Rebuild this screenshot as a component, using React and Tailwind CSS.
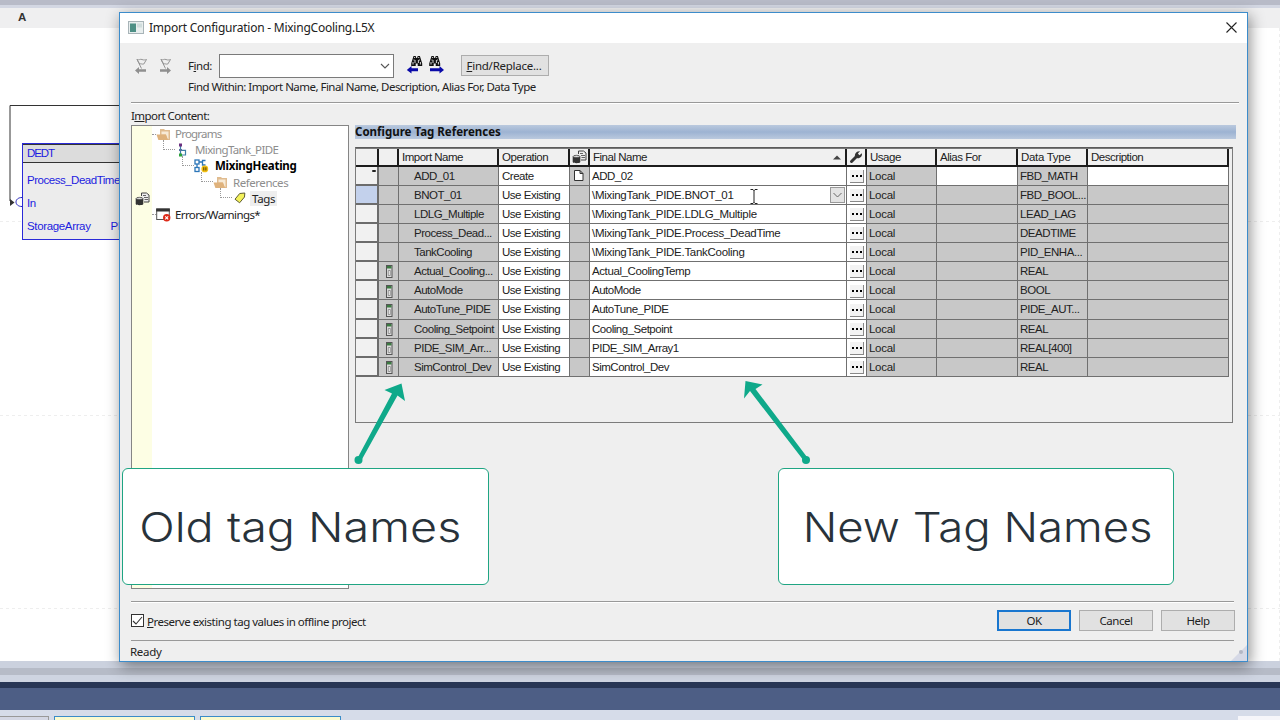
import React from "react";

const ui = "font-['Noto_Sans',sans-serif]";
const gridFont = "font-['Liberation_Sans',Arial,sans-serif]";

function Folder() {
  return (
    <svg width="15" height="13" viewBox="0 0 15 13" className="shrink-0">
      <path d="M4 1h4l1 1h5v10H4z" fill="#e0bc90" />
      <path d="M5.500 3.500h7V11h-1L10 6.500H5.500z" fill="#f7ead6" />
      <path d="M.5 6.500h9.300l2.400 5.500H2.400z" fill="#dfb27c" />
    </svg>
  );
}

function ProgramIcon() {
  return (
    <svg width="10" height="14" viewBox="0 0 10 14" className="shrink-0">
      <path d="M2.5 3v9M2.5 7.3h5V12h-5" fill="none" stroke="#3d7fa8" strokeWidth="1.2" />
      <rect x="1" y="0.5" width="3" height="3" fill="#6b2f80" />
      <rect x="1" y="10.5" width="3" height="3" fill="#2ba13a" />
      <rect x="1" y="6" width="3" height="2" fill="#5472a0" />
    </svg>
  );
}

function RoutineIcon() {
  return (
    <svg width="15" height="14" viewBox="0 0 15 14" className="shrink-0">
      <g fill="#fff" stroke="#2c76b8" strokeWidth="1.3">
        <path d="M3 5v4M5 3h3" fill="none" />
        <rect x="1" y="1" width="4" height="4" />
        <rect x="1" y="8.5" width="4" height="4" />
        <path d="M11.500 1.500H8.500V6h3" fill="none" />
      </g>
      <circle cx="10.8" cy="9.9" r="3.4" fill="#f2c012" />
      <path d="M9.800 8.300v3.200M11.900 8.300v3.200" stroke="#5c4300" strokeWidth="1.1" />
    </svg>
  );
}

function TagIcon() {
  return (
    <svg width="12" height="12" viewBox="0 0 12 12" className="shrink-0">
      <path d="M1 7.2 5.7 1.5 10.8 1 10.5 5 5.6 10.8z" fill="#f4f25c" stroke="#5f5d30" strokeWidth="1" />
    </svg>
  );
}

function ErrorIcon() {
  return (
    <svg width="15" height="14" viewBox="0 0 15 14" className="shrink-0">
      <rect x=".7" y="1" width="12.6" height="10.5" fill="#fff" stroke="#555" />
      <rect x=".2" y=".5" width="13.6" height="3" fill="#333" />
      <circle cx="10.7" cy="9.8" r="3.7" fill="#dd2a18" />
      <path d="m9.2 8.3 3 3m0-3-3 3" stroke="#fff" strokeWidth="1.1" />
    </svg>
  );
}

function StoreIcon() {
  return (
    <svg width="15" height="14" viewBox="0 0 15 14" className="shrink-0">
      <path d="M6.5 4V1h5l2.5 2v7H9" fill="#eee" stroke="#444" />
      <path d="M8 3.5h3M9 5.5h4M9.5 7.5H13" stroke="#555" strokeWidth=".9" />
      <path d="M.7 6.5C.7 5 8.3 5 8.3 6.5V12c0 1.6-7.6 1.6-7.6 0z" fill="#333" />
      <ellipse cx="4.5" cy="6.4" rx="3.3" ry="1.1" fill="#ddd" stroke="#333" strokeWidth=".6" />
    </svg>
  );
}

function FlagIcon({ right }) {
  return (
    <svg width="14" height="16" viewBox="0 0 14 16" className="shrink-0">
      <path d="M3 1.500c2 1 3.200-.8 5 0s2.800.4 4.500 0L9.800 6c-1.500.5-2.500-.6-4 0zM3 1.500l4.500 9" fill="none" stroke="#959595" />
      {right ? (
        <path d="M2 11.200h7V9l4 3.500-4 3.500v-2.200H2z" fill="#8f8f8f" />
      ) : (
        <path d="M12 11.200H5V9l-4 3.500L5 16v-2.200h7z" fill="#8f8f8f" />
      )}
    </svg>
  );
}

function Binoculars({ right }) {
  return (
    <svg width="17" height="18" viewBox="0 0 17 18" className="shrink-0">
      <g transform={right ? "translate(0 -1)" : "translate(4 -1)"}>
        <path d="M3.500 1h2.200l.6 2h.8l.6-2h2.200l2.300 7.500V11H7.700V8.500H5.700V11H1.200V8.500z" fill="#111" />
        <path d="M4.600 2v1M8.700 2v1M4 4.500v1M9.400 4.500v1M3 7v2.500M5 5v3M8.400 5v3M10.400 7v2.500" stroke="#eee" strokeWidth=".9" />
      </g>
      {right ? (
        <path d="M2 12.200h9.500V10l4.500 4-4.500 3.500v-2.200H2z" fill="#0a0aa8" />
      ) : (
        <path d="M12 12.200H5.500V10L.8 14 5.500 17.500v-2.200H12z" fill="#0a0aa8" />
      )}
    </svg>
  );
}

function ControllerIcon() {
  return (
    <svg width="7" height="13" viewBox="0 0 7 13" className="ml-[2px]">
      <rect x=".5" y=".5" width="5.500" height="12" fill="#dcdcdc" stroke="#555" />
      <rect x="1" y="1" width="4.500" height="2.500" fill="#3c7a42" />
      <path d="M2.300 5.500h2v5h-2z" fill="#f2f2f2" stroke="#777" strokeWidth=".7" />
    </svg>
  );
}

function Wrench() {
  return (
    <svg width="14" height="14" viewBox="0 0 14 14">
      <path d="M2.500 11.500 7.500 6.500" stroke="#333" strokeWidth="3" strokeLinecap="round" />
      <path d="M6.300 7.600C4.900 4 7.500.6 11 1.200L8.900 3.500l1.500 1.700 2.500-2C13.600 6.400 10.500 9.600 6.300 7.600z" fill="#333" />
    </svg>
  );
}

const rows = [
  ["ADD_01", "Create", "ADD_02", "FBD_MATH"],
  ["BNOT_01", "Use Existing", "\\MixingTank_PIDE.BNOT_01", "FBD_BOOL..."],
  ["LDLG_Multiple", "Use Existing", "\\MixingTank_PIDE.LDLG_Multiple", "LEAD_LAG"],
  ["Process_Dead...", "Use Existing", "\\MixingTank_PIDE.Process_DeadTime", "DEADTIME"],
  ["TankCooling", "Use Existing", "\\MixingTank_PIDE.TankCooling", "PID_ENHA..."],
  ["Actual_Cooling...", "Use Existing", "Actual_CoolingTemp", "REAL"],
  ["AutoMode", "Use Existing", "AutoMode", "BOOL"],
  ["AutoTune_PIDE", "Use Existing", "AutoTune_PIDE", "PIDE_AUT..."],
  ["Cooling_Setpoint", "Use Existing", "Cooling_Setpoint", "REAL"],
  ["PIDE_SIM_Arr...", "Use Existing", "PIDE_SIM_Array1", "REAL[400]"],
  ["SimControl_Dev", "Use Existing", "SimControl_Dev", "REAL"],
];

const cols = "grid grid-cols-[23px_20px_100px_71px_20px_257px_20px_70px_81px_70px_141px]";
const cell = "flex items-center border-b border-r border-[#707070] pt-[1.500px]";
const head = "flex items-center border-b-2 border-r-2 border-[#1c1c1c] bg-[#f0f0f0] pt-px";

function TagGrid() {
  return (
    <div className={`${gridFont} h-[276px] w-[878px] whitespace-nowrap border border-[#7b7b7b] border-t-[#5a5a5a] text-[11.5px] leading-none tracking-[-0.48px] text-[#222]`}>
      <div className={`${cols} h-[18.500px] border-t border-[#777]`}>
        <div className={head} />
        <div className={head} />
        <div className={`${head} pl-[3px] tracking-[-0.500px]`}>Import Name</div>
        <div className={`${head} pl-[3px]`}>Operation</div>
        <div className={`${head} justify-center`}><StoreIcon /></div>
        <div className={`${head} justify-between pl-[3px] pr-1`}>
          Final Name
          <svg width="8" height="5"><path d="M0 4.500 4 .5l4 4z" fill="#444" /></svg>
        </div>
        <div className={`${head} justify-center`}><Wrench /></div>
        <div className={`${head} pl-[3px]`}>Usage</div>
        <div className={`${head} pl-[3px]`}>Alias For</div>
        <div className={`${head} pl-[3px] tracking-[-0.300px]`}>Data Type</div>
        <div className={`${head} pl-[3px]`}>Description</div>
      </div>
      {rows.map(([name, op, final, type], i) => (
        <div key={name} className={`${cols} h-[19.130px]`}>
          <div className={`flex justify-end border-b-2 border-r-2 border-[#6c6c6c] pr-px ${i === 1 ? "bg-[#c3d1ec]" : "bg-[#f1f1f1]"}`}>
            {i === 0 && <span className="mt-[3px] h-[2px] w-[4px] rounded-full bg-[#222]" />}
          </div>
          <div className={`${cell} justify-center bg-[#c8c8c8]`}>{i > 4 && <ControllerIcon />}</div>
          <div className={`${cell} bg-[#c8c8c8] pl-[15px]`}>{name}</div>
          <div className={`${cell} bg-white pl-[3px]`}>{op}</div>
          <div className={`${cell} bg-[#c8c8c8] pl-[4px]`}>
            {i === 0 && (
              <svg width="10" height="12"><path d="M.5.5H6l3 3v7H.5zM6 .5v3h3" fill="#fff" stroke="#333" /></svg>
            )}
          </div>
          <div className={`${cell} justify-between bg-white pl-[2px] pr-px ${i > 0 && i < 5 ? "tracking-[-0.280px]" : i === 5 ? "tracking-[-0.400px]" : ""}`}>
            {final}
            {i === 1 && (
              <span className="flex h-[16px] w-[15px] items-center justify-center border border-[#999] bg-[#e3e3e3]">
                <svg width="9" height="6"><path d="m.5 1 4 4 4-4" fill="none" stroke="#666" /></svg>
              </span>
            )}
          </div>
          <div className={`${cell} bg-white pl-[3px]`}>
            <span className="flex h-[13px] w-[14px] items-center justify-center gap-[2px] border-b border-r border-[#888] bg-[#f3f3f3]">
              <i className="size-[2px] bg-black" /><i className="size-[2px] bg-black" /><i className="size-[2px] bg-black" />
            </span>
          </div>
          <div className={`${cell} bg-[#c8c8c8] pl-[2px] tracking-[-0.300px]`}>Local</div>
          <div className={`${cell} ${i ? "bg-[#c8c8c8]" : "bg-white"}`} />
          <div className={`${cell} bg-[#c8c8c8] pl-[2px] tracking-[-0.450px]`}>{type}</div>
          <div className={`${cell} ${i ? "bg-[#c8c8c8]" : "bg-white"}`} />
        </div>
      ))}
    </div>
  );
}

function Elbow() {
  return <span className="mb-[8px] h-[10px] w-[12px] shrink-0 self-end border-b border-l border-dotted border-[#999]" />;
}

function Tree() {
  const row = "flex h-[16.100px] items-center";
  return (
    <div className="flex h-[464px] w-[218px] border border-[#858585] bg-white">
      <div className="w-[20px] bg-[#fdfee4] pl-[3px] pt-[66px]"><StoreIcon /></div>
      <div className="flex-1 whitespace-nowrap text-[11.5px] leading-none tracking-[-0.620px] text-[#222]">
        <div className={row}><span className="w-[4px] border-t border-dotted border-[#999]" /><Folder /><span className="ml-[4px] tracking-[-0.800px] text-[#8d8d8d]">Programs</span></div>
        <div className={`${row} pl-[11px]`}><Elbow /><span className="ml-[3px] flex"><ProgramIcon /></span><span className="ml-[7px] text-[#8d8d8d]">MixingTank_PIDE</span></div>
        <div className={`${row} pl-[30px]`}><Elbow /><RoutineIcon /><span className="ml-[6px] font-bold tracking-[-0.250px] text-black">MixingHeating</span></div>
        <div className={`${row} pl-[49px]`}><Elbow /><Folder /><span className="ml-[5px] tracking-[-0.450px] text-[#8d8d8d]">References</span></div>
        <div className={`${row} pl-[68px]`}><Elbow /><span className="ml-[2px] flex"><TagIcon /></span><span className="ml-[4px] bg-[#eee] px-[2px] py-[2px] tracking-[-0.300px]">Tags</span></div>
        <div className={row}><span className="w-[4px] border-t border-dotted border-[#999]" /><ErrorIcon /><span className="ml-[4px]">Errors/Warnings*</span></div>
      </div>
    </div>
  );
}

function Backdrop() {
  return (
    <div className="flex h-[720px] flex-col bg-white">
      <div className="h-[5px] bg-[#b8bbc8]" />
      <div className="h-[3px] bg-[#d3d7e3]" />
      <div className={`${gridFont} flex h-[20px] items-center bg-[#efeff0] pl-[18px] text-[11.5px] font-bold text-[#333]`}>A</div>
      <div className="relative h-[633px]">
        <svg width="1280" height="633" className="absolute">
          <path d="M0 193.500H120M0 387.500h120M0 580.500h120M1248 193.500h32M1248 387.500h32M1248 580.500h32M1279.500 0v633" stroke="#eee" strokeDasharray="3 3" />
          <path d="M120 77.500H10V173" fill="none" stroke="#333" />
          <path d="M22 169.500c-8 0-8 9 0 9" fill="none" stroke="#22b" />
          <path d="M10 171v7l4.500-3.500z" fill="#333" />
        </svg>
        <div className={`${gridFont} absolute left-[22px] top-[115px] h-[97px] w-[120px] border border-[#2a2ad8] bg-[#ececec] text-[11.5px] leading-none tracking-[-0.480px] text-[#1c1ce0]`}>
          <div className="flex h-[19px] items-center border-b border-t border-[#333] bg-[#dcdcdc] pl-[4px] pt-px tracking-[-1.100px]">DEDT</div>
          <div className="pl-[4px] pt-[12px]">Process_DeadTime</div>
          <div className="pl-[4px] pt-[11px]">In</div>
          <div className="flex gap-[20px] pl-[4px] pt-[12px]"><span className="tracking-[-0.350px]">StorageArray</span><span>PID</span></div>
        </div>
      </div>
      <div className="h-[7px] bg-[#cbd1de]" />
      <div className="h-[7px] bg-[#b6bbc7]" />
      <div className="h-[7px] bg-[#ced4e1]" />
      <div className="h-[6px] bg-[#283655]" />
      <div className="h-[22px] bg-[#4d5e85]" />
      <div className="flex h-[10px] items-end bg-[#d6dce9]">
        <div className="h-[4px] w-[49px] border-r border-t border-[#999] bg-[#d4d7e4]" />
        <div className="ml-[5px] h-[4px] w-[141px] border border-b-0 border-[#3a8cc8] bg-[#fbfbd0]" />
        <div className="ml-[5px] h-[4px] w-[141px] border border-b-0 border-[#3a8cc8] bg-[#fbfbd0]" />
        <div className="ml-auto h-[4px] w-[42px] bg-[#f6f6fa]" />
      </div>
    </div>
  );
}

function Button({ primary, children }) {
  return (
    <button className={`flex h-[21px] w-[74px] items-center justify-center bg-[#e1e1e1] tracking-[-0.450px] ${primary ? "border-2 border-[#1976cf]" : "border border-[#adadad]"}`}>
      {children}
    </button>
  );
}

function Dialog() {
  return (
    <div className={`${ui} absolute left-[119px] top-[12px] flex h-[650px] w-[1129px] flex-col border border-[#3c8ccb] bg-[#efefef] text-[11.5px] leading-none tracking-[-0.530px] text-[#222] shadow-[2px_4px_14px_rgba(0,0,0,0.45)]`}>
      <div className="flex h-[30px] items-center bg-white pl-[8px] pr-[10px] text-[12px] tracking-[-0.240px]">
        <svg width="16" height="14" viewBox="0 0 16 14">
          <rect x=".5" y=".5" width="15" height="12" fill="#e8eeee" stroke="#a8b4b8" />
          <rect x="2" y="2.500" width="6" height="8.500" fill="#4d8f85" />
          <rect x="9" y="2.500" width="5" height="4" fill="#cfdcdc" />
        </svg>
        <span className="ml-[5px]">Import Configuration - MixingCooling.L5X</span>
        <svg width="11" height="11" className="mb-[2px] ml-auto"><path d="m.5.5 10 10m0-10-10 10" stroke="#222" strokeWidth="1.100" /></svg>
      </div>
      <div className="mt-[11px] flex h-[23px] items-center pl-[14px]">
        <FlagIcon />
        <span className="ml-[10px] flex"><FlagIcon right /></span>
        <span className="ml-[16px] w-[31px] tracking-[-0.450px]">F<u>i</u>nd:</span>
        <div className="flex h-[24px] w-[175px] items-center justify-end border border-[#7a7a7a] bg-white pr-[3px]">
          <svg width="10" height="6"><path d="m1 1 4 4 4-4" fill="none" stroke="#555" strokeWidth="1.100" /></svg>
        </div>
        <span className="-mt-[2px] ml-[12px] flex"><Binoculars /></span>
        <span className="-mt-[2px] ml-[5px] flex"><Binoculars right /></span>
        <div className="ml-[16px] flex h-[21px] w-[88px] items-center justify-center border border-[#adadad] bg-[#e1e1e1] pr-[2px] tracking-[-0.250px]"><span><u>F</u>ind/Replace...</span></div>
      </div>
      <div className="flex h-[21px] items-center pb-[2px] pl-[68px]">Find Within: Import Name, Final Name, Description, Alias For, Data Type</div>
      <div className="ml-[11px] mt-[4px] h-[2px] w-[1108px] border-b border-t border-b-white border-t-[#999]" />
      <div className="flex h-[21px] items-end pl-[11px] tracking-[-0.580px]"><span className="mb-[4px]">I<u>m</u>port Content:</span></div>
      <div className="flex gap-[6px] pl-[11px]">
        <Tree />
        <div className="w-[881px]">
          <div className="mb-[8px] flex h-[14px] items-center bg-linear-to-b from-[#bac9de] via-[#9db3d2] to-[#bac9de] text-[11.5px] font-bold tracking-normal text-[#111]">Configure Tag References</div>
          <TagGrid />
        </div>
      </div>
      <div className="ml-[11px] mt-[12px] h-[2px] w-[1103px] border-b border-t border-b-white border-t-[#999]" />
      <div className="mt-[7px] flex h-[21px] items-center gap-[8px] pl-[11px] pr-[12px]">
        <span className="flex h-[13px] w-[13px] items-center justify-center border border-[#333] bg-white">
          <svg width="11" height="10"><path d="m1 5 3 3 6-7" fill="none" stroke="#333" strokeWidth="1.100" /></svg>
        </span>
        <span className="-ml-[5px] mr-auto pt-[2px] tracking-[-0.480px]"><u>P</u>reserve existing tag values in offline project</span>
        <Button primary>OK</Button>
        <Button>Cancel</Button>
        <Button>Help</Button>
      </div>
      <div className="ml-[11px] mt-[9px] h-px w-[1103px] bg-[#999]" />
      <div className="flex h-[20px] items-start justify-between pl-[10px]">
        <span className="pt-[5px] tracking-[-0.300px]">Ready</span>
        <svg width="16" height="16" className="self-end"><path d="M16 0v16H0z" fill="#d6d9e6" /><circle cx="10" cy="7" r="2" fill="#b3b7c4" /></svg>
      </div>
    </div>
  );
}

export default function App() {
  return (
    <div className="relative h-[720px] w-[1280px] overflow-hidden">
      <Backdrop />
      <Dialog />
      <svg width="10" height="17" className="absolute left-[749px] top-[188px]">
        <path d="M1.500 1.500H4l1 1 1-1h2.500M5 2v13M1.500 15.500H4l1-1 1 1h2.500" fill="none" stroke="#222" />
      </svg>
      <svg width="1280" height="720" className="pointer-events-none absolute left-0 top-0" fill="#0fa98a">
        <circle cx="358.500" cy="460" r="4" />
        <path d="M357 459 392 393.500 384.500 390 401.500 383.500 405 401 397.500 395.500 361 461z" />
        <circle cx="806" cy="460" r="4" />
        <path d="M804 461 750 391 744 398.500 745.500 381 762.500 384.500 755.500 389 808.500 459z" />
      </svg>
      <div className="absolute left-[122px] top-[468px] flex h-[117px] w-[367px] items-center justify-center rounded-[6px] border-[1.500px] border-[#1fa583] bg-white pr-[10px] pt-[2px] font-['Inter',sans-serif] text-[41px] font-light text-[#28323a]">
        <span className="scale-x-[1.14] whitespace-nowrap">Old tag Names</span>
      </div>
      <div className="absolute left-[778px] top-[468px] flex h-[117px] w-[396px] items-center justify-center rounded-[6px] border-[1.500px] border-[#1fa583] bg-white pl-[3px] pt-[2px] font-['Inter',sans-serif] text-[41px] font-light text-[#28323a]">
        <span className="scale-x-[1.11] whitespace-nowrap">New Tag Names</span>
      </div>
    </div>
  );
}
